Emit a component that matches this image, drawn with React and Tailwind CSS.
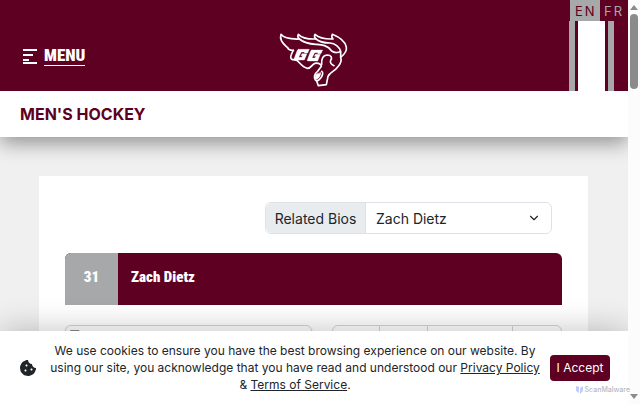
import { useState } from "react";
import { FaCookieBite } from "react-icons/fa";
import { ChevronDown } from "lucide-react";

const bios = ["Zach Dietz"];

function TeamLogo() {
  return (
    <svg
      className="h-[70px] w-[90px]"
      viewBox="0 -12 270 210"
      fill="none"
      stroke="white"
      strokeWidth="5"
      strokeLinecap="round"
      strokeLinejoin="round"
      role="img"
      aria-label="Gee-Gees"
    >
      <path d="M73 76C64 78 54 70 58 70C36 51 32 41 36 28C44 39 62 43 91 42C86 38 85 34 88 28C97 38 112 43 141 42C136 38 135 34 138 28C149 38 162 43 192 42C188 38 187 34 190 28C210 36 228 49 232 66C234 79 224 90 215 97C219 109 214 118 206 126C198 138 182 142 177 154L172 179L148 182L143 168" />
      <path d="M73 76C66 88 62 96 67 102C73 106 80 103 85 107C94 116 103 129 116 130C127 130 128 118 138 115C151 113 157 119 157 124L145 140C136 146 134 158 139 165C145 171 154 162 158 155C162 147 161 141 158 139" />
      <path d="M91 42C104 53 123 57 140 58C155 59 176 59 188 78C197 85 210 83 214 79" />
      <path d="M141 42C154 53 170 54 183 54C198 55 211 66 215 79L215 97" />
      <path d="M158 118C157 100 161 91 174 90C188 90 190 99 185 106C182 112 187 118 195 122" />
      <path d="M142 148C137 154 137 163 143 163C150 160 155 151 155 144Z" fill="white" strokeWidth="2" />
      <path
        d="M89 73H121L116 84H106L107 81H97L89 97H98L101 92H96L99 86H114L106 105H77C74 105 74 102 76 99L84 78C85 75 87 73 89 73Z"
        fill="white"
        strokeWidth="1"
      />
      <path
        d="M129 75H161L156 86H146L147 83H137L129 99H138L141 94H136L139 88H154L146 108H117C114 108 114 105 116 102L124 80C125 77 127 75 129 75Z"
        fill="white"
        strokeWidth="1"
      />
    </svg>
  );
}

function Header() {
  return (
    <header className="relative z-10 grid grid-cols-3 bg-[#5e0022] text-white">
      <div className="flex items-center pt-5 pl-[23px]">
        <button type="button" className="flex items-center gap-1.5">
          <svg className="h-4 w-[15px]" viewBox="0 0 15 16" fill="white" aria-hidden="true">
            <path d="M0 1h14v2H0zM0 6h10v2H0zM0 11h6v2H0zM0 14h14v2H0z" />
          </svg>
          <span className="border-b border-white font-['Roboto_Condensed','Liberation_Sans',sans-serif] text-[17px] leading-5 font-black">
            MENU
          </span>
        </button>
      </div>
      <a href="#home" className="flex items-end justify-center pt-[21px]">
        <TeamLogo />
      </a>
      <div className="flex flex-col items-end">
        <nav className="flex h-[21px] text-[13px] leading-[22px] tracking-[2px]">
          <a href="#en" className="w-[30px] bg-[#a7a8aa] pl-[5px] text-[#5e0022]">
            EN
          </a>
          <a href="#fr" className="w-7 pl-1 text-[#a7a8aa]">
            FR
          </a>
        </nav>
        <div className="mr-3.5 flex flex-1 gap-[3px]">
          <span className="w-1.5 bg-[#a7a8aa]" />
          <span className="w-[27px] bg-white" />
          <span className="w-1.5 bg-[#a7a8aa]" />
        </div>
      </div>
    </header>
  );
}

function PlayerCard() {
  const [bio, setBio] = useState(bios[0]);

  return (
    <section className="bg-white px-[26px] pt-[26px] pb-10">
      <div className="mr-2.5 ml-auto flex h-8 w-[287px] rounded-md border border-[#dee2e6] text-[14px] text-[#212529]">
        <label
          htmlFor="related-bios"
          className="flex w-[100px] shrink-0 items-center justify-center rounded-l-md border-r border-[#dee2e6] bg-[#e9ecef]"
        >
          Related Bios
        </label>
        <div className="relative flex-1">
          <select
            id="related-bios"
            value={bio}
            onChange={(e) => setBio(e.target.value)}
            className="h-full w-full appearance-none rounded-r-md bg-white pl-2.5"
          >
            {bios.map((name) => (
              <option key={name}>{name}</option>
            ))}
          </select>
          <ChevronDown className="pointer-events-none absolute top-2 right-2.5 size-3.5" />
        </div>
      </div>

      <div className="mt-[19px] flex h-[52px] items-stretch overflow-hidden rounded-t-md bg-[#5e0022] font-['Roboto_Condensed','Liberation_Sans',sans-serif] text-[15px] font-black text-white">
        <span className="flex w-[53px] items-center justify-center bg-[#a7a8aa] pb-1">31</span>
        <h1 className="flex items-center pb-1 pl-[13px]">Zach Dietz</h1>
      </div>

      <div className="mt-5 flex items-start gap-5">
        <div className="h-60 flex-1 rounded-md border border-gray-300 p-1 shadow">
          <svg className="h-3 w-3" viewBox="0 0 12 12" fill="none" stroke="#8b8b8b">
            <path d="M.5 .5H9L11.5 3V11.5H.5Z" />
          </svg>
        </div>
        <div className="flex h-20 w-[230px] divide-x divide-gray-300 rounded-md border border-gray-300">
          <span className="w-[47px]" />
          <span className="w-12" />
          <span className="w-[85px]" />
          <span className="flex-1" />
        </div>
      </div>
    </section>
  );
}

function CookieBar() {
  return (
    <div className="absolute inset-x-0 bottom-0 flex items-center bg-white pr-[18px] pl-5 text-[12px] text-[#212529] shadow-[0_0_32px_rgba(0,0,0,0.25)]">
      <FaCookieBite className="size-4 shrink-0" />
      <p className="flex-1 py-[11px] pr-1.5 pl-2.5 text-center leading-[17px]">
        We use cookies to ensure you have the best browsing experience on our website. By using our
        site, you acknowledge that you have read and understood our{" "}
        <a href="#privacy" className="underline">
          Privacy Policy
        </a>{" "}
        &amp;{" "}
        <a href="#terms" className="underline">
          Terms of Service
        </a>
        .
      </p>
      <button type="button" className="h-[26px] w-[60px] shrink-0 rounded bg-[#5e0022] text-white">
        I Accept
      </button>
    </div>
  );
}

function Scrollbar() {
  return (
    <div className="flex w-3 shrink-0 flex-col items-center bg-[#fcfcfc] py-1">
      <svg className="h-2 w-2" viewBox="0 0 8 8" fill="#8b8b8b">
        <path d="M0 6L4 1L8 6Z" />
      </svg>
      <div className="mt-0.5 h-[75px] w-2 rounded-full bg-[#8b8b8b]" />
      <svg className="mt-auto h-2 w-2" viewBox="0 0 8 8" fill="#8b8b8b">
        <path d="M0 2L4 7L8 2Z" />
      </svg>
    </div>
  );
}

export default function App() {
  return (
    <div className="relative flex h-screen overflow-hidden font-['Inter',sans-serif]">
      <div className="relative flex-1 overflow-hidden bg-[#f0f0f0]">
        <Header />
        <div className="relative bg-white px-5 py-[11px] shadow-[0_6px_20px_rgba(0,0,0,0.4)]">
          <h2 className="text-[16px] leading-6 font-bold text-[#5e0022]">MEN'S HOCKEY</h2>
        </div>
        <main className="pt-[39px] pr-10 pl-[39px]">
          <PlayerCard />
        </main>
        <CookieBar />
      </div>
      <Scrollbar />
      <div className="absolute right-2.5 bottom-2.5 flex items-center gap-0.5 text-[7px] leading-2 font-medium text-[#b8b8c0]">
        <svg className="h-2 w-[7px]" viewBox="0 0 7 8" fill="#c3cdfa">
          <path d="M0 0L3 1V7L0 5ZM4 2L7 0V5L4 8Z" />
        </svg>
        ScanMalware
      </div>
    </div>
  );
}
